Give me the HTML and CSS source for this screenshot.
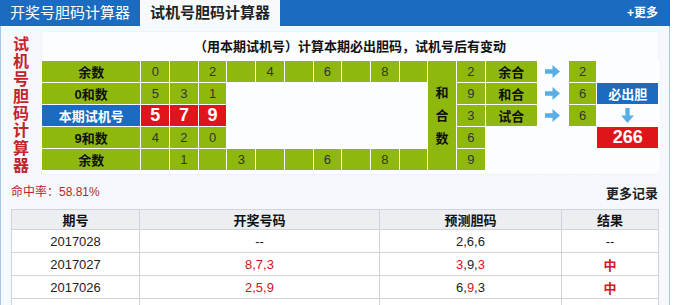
FILE: index.html
```html
<!DOCTYPE html>
<html lang="zh-CN">
<head>
    <meta charset="UTF-8">
    <title>试机号胆码计算器</title>
    <link rel="stylesheet" href="styles.css">
</head>
<body>
    <div class="box">
        <div class="hd">
            <a class="tab">开奖号胆码计算器</a>
            <a class="tab on">试机号胆码计算器</a>
            <a class="more">+更多</a>
        </div>
        <div class="bd">
            <div class="calc">
                <div class="vtitle">试<br>机<br>号<br>胆<br>码<br>计<br>算<br>器</div>
                <div class="panel">
                    <div class="ptitle">（用本期试机号）计算本期必出胆码，试机号后有变动</div>
                    <table class="grid">
                        <colgroup>
                            <col class="c-lb">
                            <col class="c-n"><col class="c-n"><col class="c-n"><col class="c-n"><col class="c-n">
                            <col class="c-n"><col class="c-n"><col class="c-n"><col class="c-n"><col class="c-n">
                            <col class="c-n"><col class="c-n">
                            <col class="c-lb2"><col class="c-ar"><col class="c-n"><col class="c-end">
                        </colgroup>
                        <tr>
                            <td class="g b">余数</td>
                            <td class="g">0</td><td class="g"></td><td class="g">2</td><td class="g"></td><td class="g">4</td>
                            <td class="g"></td><td class="g">6</td><td class="g"></td><td class="g">8</td><td class="g"></td>
                            <td class="g b hhs" rowspan="5">和<br>合<br>数</td>
                            <td class="g">2</td>
                            <td class="g b">余合</td>
                            <td><svg class="arr" width="15" height="13" viewBox="0 0 14 12"><path d="M0 4h7V0l7 6-7 6V8H0z"/></svg></td>
                            <td class="g">2</td>
                            <td></td>
                        </tr>
                        <tr>
                            <td class="g b">0和数</td>
                            <td class="g">5</td><td class="g">3</td><td class="g">1</td>
                            <td></td><td></td><td></td><td></td><td></td><td></td><td></td>
                            <td class="g">9</td>
                            <td class="g b">和合</td>
                            <td><svg class="arr" width="15" height="13" viewBox="0 0 14 12"><path d="M0 4h7V0l7 6-7 6V8H0z"/></svg></td>
                            <td class="g">6</td>
                            <td class="blue b">必出胆</td>
                        </tr>
                        <tr>
                            <td class="blue b">本期试机号</td>
                            <td class="red big">5</td><td class="red big">7</td><td class="red big">9</td>
                            <td></td><td></td><td></td><td></td><td></td><td></td><td></td>
                            <td class="g">3</td>
                            <td class="g b">试合</td>
                            <td><svg class="arr" width="15" height="13" viewBox="0 0 14 12"><path d="M0 4h7V0l7 6-7 6V8H0z"/></svg></td>
                            <td class="g">6</td>
                            <td><svg class="arr" width="13" height="15" viewBox="0 0 12 14"><path d="M4 0h4v7h4l-6 7-6-7h4z"/></svg></td>
                        </tr>
                        <tr>
                            <td class="g b">9和数</td>
                            <td class="g">4</td><td class="g">2</td><td class="g">0</td>
                            <td></td><td></td><td></td><td></td><td></td><td></td><td></td>
                            <td class="g">6</td>
                            <td></td><td></td><td></td>
                            <td class="red big">266</td>
                        </tr>
                        <tr>
                            <td class="g b">余数</td>
                            <td class="g"></td><td class="g">1</td><td class="g"></td><td class="g">3</td><td class="g"></td>
                            <td class="g"></td><td class="g">6</td><td class="g"></td><td class="g">8</td><td class="g"></td>
                            <td class="g">9</td>
                            <td></td><td></td><td></td><td></td>
                        </tr>
                    </table>
                </div>
            </div>
            <div class="stat">
                <span class="rate">命中率：58.81%</span>
                <a class="rec">更多记录</a>
            </div>
            <table class="hist">
                <tr><th class="h1">期号</th><th class="h2">开奖号码</th><th class="h3">预测胆码</th><th>结果</th></tr>
                <tr><td>2017028</td><td>--</td><td>2,6,6</td><td>--</td></tr>
                <tr><td>2017027</td><td class="r">8,7,3</td><td><span class="r">3</span>,9,<span class="r">3</span></td><td class="r b">中</td></tr>
                <tr><td>2017026</td><td class="r">2,5,9</td><td>6,<span class="r">9</span>,3</td><td class="r b">中</td></tr>
                <tr><td></td><td></td><td></td><td></td></tr>
            </table>
        </div>
    </div>
</body>
</html>
```

FILE: styles.css
```css
/* 试机号胆码计算器 */
body {
    margin: 0;
    font-family: "Liberation Sans", "Noto Sans CJK SC", sans-serif;
    font-size: 12px;
    color: #222;
    background: #fff;
}
.box {
    width: 668px;
    border: 1px solid #a9c7e4;
    border-top: none;
    background: #f5f9fd;
}
.hd {
    height: 26px;
    background: #1b6cc0;
    display: flex;
    align-items: stretch;
    margin: 0 -1px;
}
.tab {
    width: 140px;
    font-size: 15px;
    line-height: 26px;
    text-align: center;
    color: #fff;
}
.tab.on {
    background: #f7fafd;
    color: #222;
    font-weight: bold;
}
.more {
    margin-left: auto;
    padding-right: 12px;
    color: #fff;
    font-weight: bold;
    line-height: 26px;
}
.bd {
    padding: 5px 10px 0 10px;
}
.calc {
    display: flex;
    margin-left: -10px;
}
.vtitle {
    width: 40px;
    padding-top: 5px;
    text-align: center;
    color: #c4232b;
    font-size: 16px;
    font-weight: bold;
    line-height: 17.3px;
}
.panel {
    width: 616px;
    background: #fbfdff;
    border: 1px solid #eef3f8;
    padding-bottom: 3px;
}
.ptitle {
    height: 28px;
    line-height: 30px;
    text-align: center;
    font-weight: bold;
    font-size: 13px;
    color: #111;
}
.grid {
    border-collapse: collapse;
    table-layout: fixed;
    width: 618px;
    margin-left: -1px;
}
.grid td {
    border: 1px solid #fff;
    height: 21px;
    padding: 0;
    text-align: center;
    font-size: 13px;
    color: #333;
}
.c-lb { width: 97px; }
.c-n { width: 28px; }
.c-lb2 { width: 51px; }
.c-ar { width: 30px; }
.c-end { width: 60px; }
.grid td.g { background: #8fb80e; }
.grid td.blue { background: #1b6cc0; color: #fff; }
.grid td.red { background: #e0141b; color: #fff; }
.grid td.b { font-weight: bold; color: #111; }
.grid td.blue.b { color: #fff; }
.grid td.big { font-size: 18px; font-weight: bold; }
.grid td.hhs { line-height: 23px; }
.arr {
    display: block;
    margin: 0 auto;
    fill: #5aaee6;
}
.stat {
    display: flex;
    justify-content: space-between;
    align-items: center;
    height: 34px;
    padding-right: 1px;
}
.rate {
    color: #b8262e;
    font-size: 12px;
    margin-top: -4px;
}
.rec {
    font-weight: bold;
    font-size: 13px;
    color: #222;
}
.hist {
    width: 648px;
    border-collapse: collapse;
    table-layout: fixed;
    background: #fff;
}
.hist th, .hist td {
    border: 1px solid #cfd4da;
    text-align: center;
    padding: 0;
}
.hist th {
    height: 19px;
    background: #eceef1;
    font-size: 13px;
    color: #111;
}
.hist td {
    height: 22px;
    font-size: 13px;
    color: #222;
}
.h1 { width: 127px; }
.h2 { width: 239px; }
.h3 { width: 181px; }
.hist .r { color: #d2141c; }
.hist .b { font-weight: bold; }
```
